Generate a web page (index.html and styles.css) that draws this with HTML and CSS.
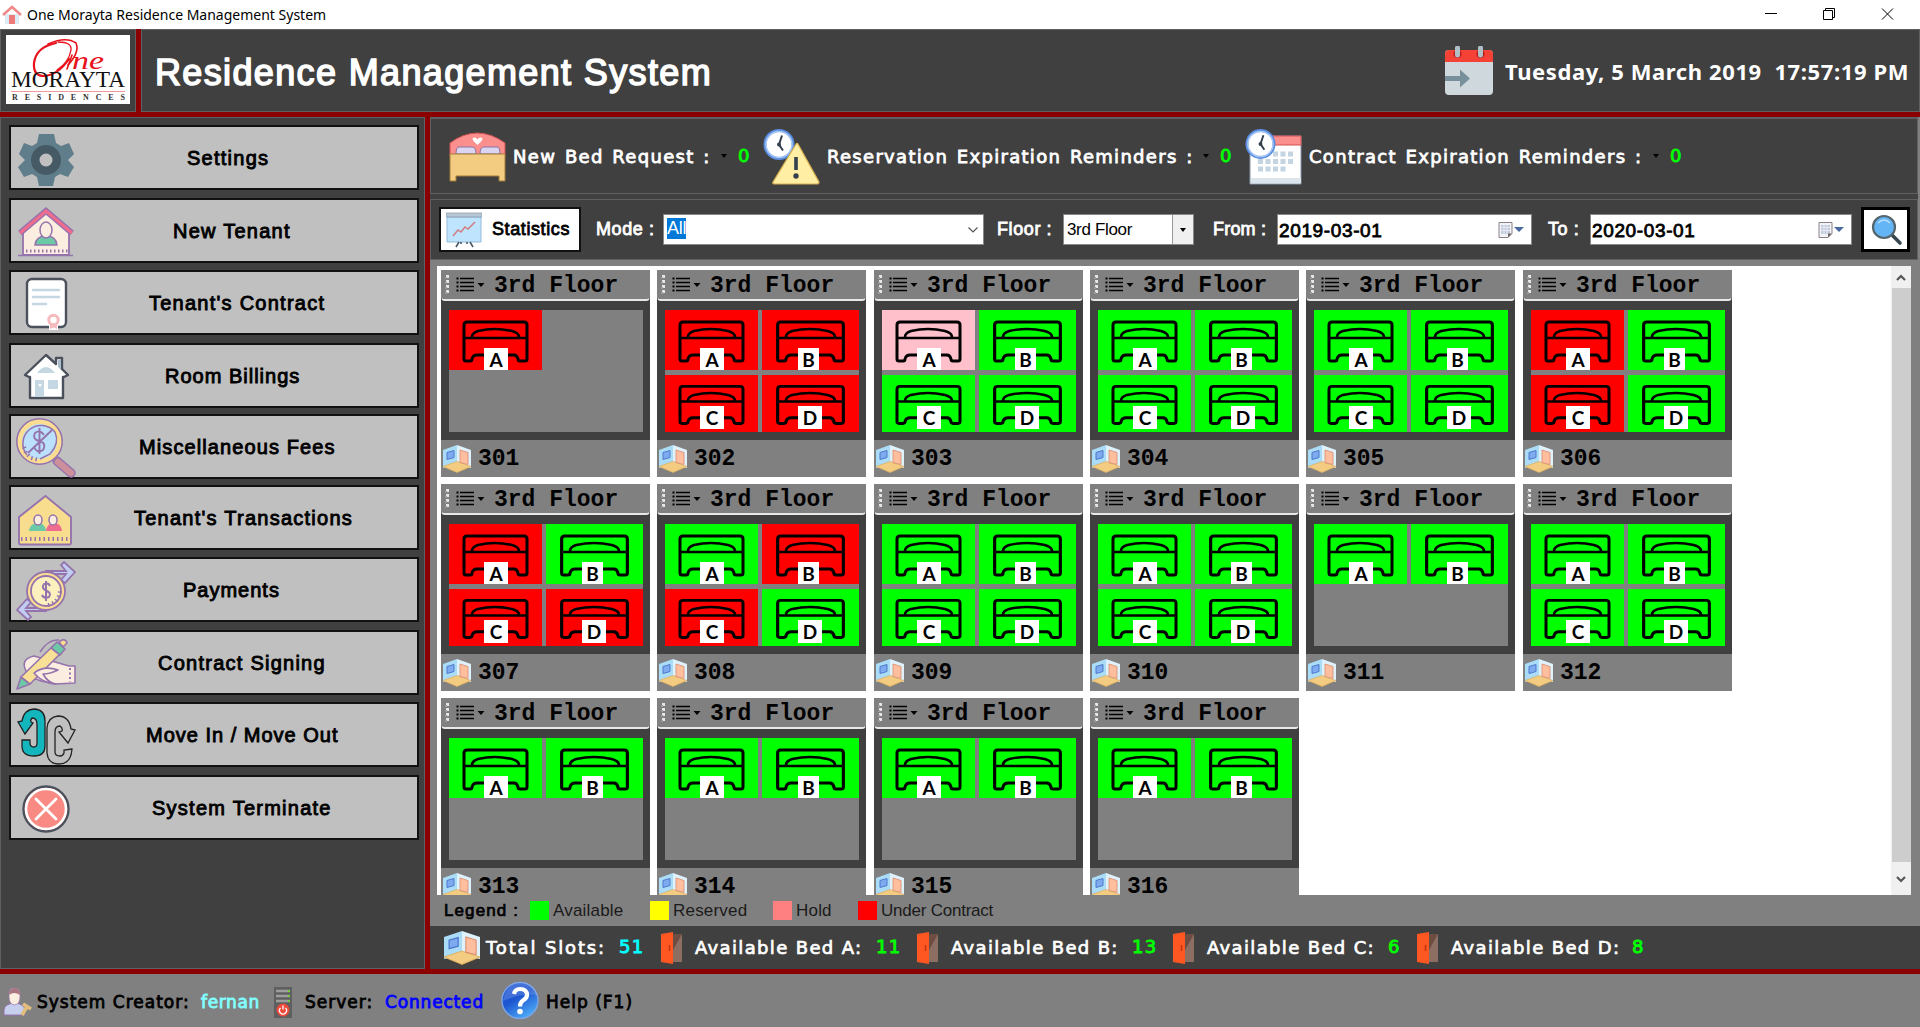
FILE: index.html
```html
<!DOCTYPE html>
<html lang="en">
<head>
<meta charset="utf-8">
<title>One Morayta Residence Management System</title>
<link rel="stylesheet" href="styles.css">
</head>
<body>
<svg class="defs" aria-hidden="true">
  <symbol id="bed" viewBox="0 0 93 60" preserveAspectRatio="none">
    <g fill="none" stroke="#000" stroke-width="3">
      <path d="M15 28V15q0-3 3-3h57q3 0 3 3v34q0 2-2 2h-5q-2 0-2-2-1-4-4-4H28q-4 0-5 4 0 2-2 2h-4q-2 0-2-2z"/>
      <path d="M15 28h63M23 27q0-4 6-6 17-4 34 0 7 2 7 6" stroke-width="2.600"/>
    </g>
  </symbol>
  <symbol id="room" viewBox="0 0 28 28" preserveAspectRatio="none">
    <path d="M0 5l14-5v21L0 23z" fill="#aadcf8"/>
    <path d="M14 0l14 5v18l-14-3z" fill="#dff1fb"/>
    <path d="M0 21.500l14-5 14 5-14 6z" fill="#f3cc82" stroke="#dcae5c" stroke-width=".7"/>
    <path d="M4 7.500l7-2v7l-7 2z" fill="#7eaaf0" stroke="#4e79cb" stroke-width="1"/>
    <path d="M17 5l8 2.500v12l-8-2z" fill="#ffbf9f" stroke="#d98a6c" stroke-width=".8"/>
  </symbol>
  <symbol id="door" viewBox="0 0 21 32">
    <path d="M8 2h13v28H8z" fill="#8d6e63"/><path d="M12 2h9L12 18z" fill="#6d4c41"/>
    <path d="M0 2l12-2v32L0 30z" fill="#ff5722"/><path d="M8.500 13v6" stroke="#bf360c" stroke-width="1.500"/>
  </symbol>
  <symbol id="clock" viewBox="0 0 32 32">
    <circle cx="16" cy="16" r="14" fill="#fff" stroke="#5b8de0" stroke-width="3"/><circle cx="16" cy="16" r="13" fill="none" stroke="#a9c8f5" stroke-width="1.500"/>
    <path d="M19 7l-3 9 4 6" fill="none" stroke="#333f4d" stroke-width="2"/><circle cx="16" cy="16" r="2" fill="#333f4d"/>
  </symbol>
  <symbol id="datepick" viewBox="0 0 26 16">
    <path d="M1 .5h13v11l-4 4H1z" fill="#f4f4f8" stroke="#8a8088"/><path d="M3 3h9v9H3z" fill="#c3cbe0"/>
    <path d="M3 5.500h9M3 8.500h9M6 3v9M9 3v9" stroke="#f4f4f8" stroke-width=".7"/><path d="M14 11.500h-4v4z" fill="#6d6468"/>
    <path d="M16 5h10l-5 5z" fill="#4a69a0"/>
  </symbol>
  <symbol id="menu" viewBox="0 0 40 20">
    <g fill="#e6e6e6"><path d="M1 0h3v3H1zM1 5h3v3H1zM1 10h3v3H1zM1 15h3v3H1z"/></g>
    <g fill="#9a9a9a"><path d="M0 2h2v2H0zM0 7h2v2H0zM0 12h2v2H0zM0 17h2v2H0z"/></g>
    <path d="M15 3.500h14M15 7.500h14M15 11.500h14M15 15.500h14" stroke="#000" stroke-width="1.500"/>
    <path d="M11.500 2.500h2v2h-2zM11.500 6.500h2v2h-2zM11.500 10.500h2v2h-2zM11.500 14.500h2v2h-2z"/>
    <path d="M32.500 8h7L36 12z"/>
  </symbol>
</svg>

<header class="titlebar">
  <svg class="app-icon" viewBox="0 0 20 20"><path d="M3 9h14v10H3z" fill="#dcecf7"/><path d="M7 10h6v9H7z" fill="#ef7b7b"/><path d="M1 10l9-8 9 8" fill="none" stroke="#f08a8a" stroke-width="2.600"/></svg>
  <span class="t-window">One Morayta Residence Management System</span>
  <svg class="win-controls" viewBox="0 0 140 29"><g fill="none" stroke="#000"><path d="M5 13.500h12"/><path d="M63.500 10.500h9v9h-9zM65.500 10v-1.500h9v9H73"/><path d="M122 8.500l11 11M133 8.500l-11 11"/></g></svg>
</header>

<section class="banner">
  <div class="brand">
    <svg viewBox="0 0 124 69">
      <g fill="none" stroke="#e8121c" stroke-linecap="round"><path d="M50 8Q30 12 28 28q-1 13 10 13 14-1 25-17" stroke-width="2.200"/><path d="M42 9Q60 1 70 8q4 9-8 22" stroke-width="1.600"/><path d="M52 7q14 0 13 8-2 12-14 20" stroke-width="1.300"/><path d="M66 20l-5 14" stroke-width="1.600"/></g>
      <text x="66" y="34" font-family="Liberation Serif, serif" font-style="italic" font-size="26" fill="#e8121c" textLength="32" lengthAdjust="spacingAndGlyphs">ne</text>
      <text x="5" y="52" font-family="Liberation Serif, serif" font-size="23" fill="#111" textLength="114" lengthAdjust="spacingAndGlyphs">MORAYTA</text>
      <path d="M5 56.500h114" stroke="#f09a9a"/>
      <text x="6" y="65" font-family="Liberation Serif, serif" font-weight="bold" font-size="8" fill="#333" textLength="113">RESIDENCES</text>
    </svg>
  </div>
  <div class="heading">
    <h1 class="t-h1">Residence Management System</h1>
    <svg class="cal-icon" viewBox="0 0 48 49"><rect y="4" width="48" height="45" rx="4" fill="#cfd8dc"/><path d="M0 16V8q0-4 4-4h40q4 0 4 4v8z" fill="#f44336"/><circle cx="12.500" cy="8" r="4" fill="#b71c1c"/><circle cx="35.500" cy="8" r="4" fill="#b71c1c"/><path d="M12.500 2v7M35.500 2v7" stroke="#b0bec5" stroke-width="5" stroke-linecap="round"/><path d="M0 30h15v-6.500l10 9-10 9V35H0z" fill="#78909c"/></svg>
    <span class="t-date">Tuesday, 5 March 2019&nbsp; 17:57:19 PM</span>
  </div>
</section>

<div class="body">
  <nav class="sidebar">
    <button class="nav n1"><svg viewBox="0 0 60 60"><path d="M23 5h15l2 9 5 3 8-3 5 11-6 6 6 7-6 10-8-3-5 3-2 9H23l-2-9-5-3-8 3-6-10 7-7-6-6 5-11 8 3 5-3z" fill="#607d8b"/><circle cx="30" cy="31" r="10.500" fill="none" stroke="#455a64" stroke-width="9"/><circle cx="30" cy="31" r="6.500" fill="#c0c0c0"/></svg><span>Settings</span></button>
    <button class="nav n2"><svg viewBox="0 0 60 60"><path d="M7 28L30 10l23 18v25H7z" fill="#fbeee0" stroke="#9573ad" stroke-width="1.800"/><path d="M4 31L30 9l26 22" fill="none" stroke="#9573ad" stroke-width="6"/><path d="M4 31L30 9l26 22" fill="none" stroke="#ef6c8e" stroke-width="3"/><path d="M19 43q1-9 11-9t11 9z" fill="#6cc9a6" stroke="#9573ad" stroke-width="1.500"/><ellipse cx="30" cy="28" rx="6" ry="8" fill="#fbeee0" stroke="#9573ad" stroke-width="1.500"/><path d="M10 49h42" stroke="#9573ad" stroke-width="3" stroke-dasharray="1.500 2.500"/><path d="M2 53.500h55" stroke="#9573ad" stroke-width="1.500"/></svg><span>New Tenant</span></button>
    <button class="nav n3"><svg viewBox="0 0 60 60"><rect x="11" y="5" width="39" height="48" rx="5" fill="#fff" stroke="#4a505c" stroke-width="2.400"/><path d="M17 16h26M17 23h26M17 30h13" stroke="#c5d7e3" stroke-width="2.600" stroke-linecap="round"/><path d="M33 49h9v7h-9z" fill="#fff"/><path d="M34 49h7v6l-3.500-1.500L34 55z" fill="#f4babe"/><circle cx="37.500" cy="46" r="4.700" fill="#fff" stroke="#f4babe" stroke-width="3"/></svg><span>Tenant's Contract</span></button>
    <button class="nav n4"><svg viewBox="0 0 60 60"><path d="M30 8L9 28l4 2h1v21h33V30h1l4-2-6-6V11h-6v6z" fill="#fff" stroke="#4a505c" stroke-width="2.400" stroke-linejoin="round"/><path d="M42 13h3v10l-3-3z" fill="#a9bccb"/><path d="M21 26q9-12 18 0zM19 33h9v17h-9zM32 33h10v9H32z" fill="#c5d7e3"/><circle cx="24" cy="38" r="1.500" fill="#fff"/></svg><span>Room Billings</span></button>
    <button class="nav n5"><svg viewBox="0 0 60 60"><path d="M41 43l14 12" stroke="#9573ad" stroke-width="9.500" stroke-linecap="round"/><path d="M42 44l13 11" stroke="#cc8f9b" stroke-width="6.500" stroke-linecap="round"/><circle cx="23.500" cy="23.500" r="20" fill="#bae0fb" stroke="#fbdd92" stroke-width="5"/><g fill="none" stroke="#9573ad" stroke-width="1.500"><circle cx="23.500" cy="23.500" r="22.700"/><path d="M11 37A17 17 0 0 1 39 14q5 11-5 22L24 41"/><path d="M8 29l2 6 5 5 8 2" stroke-width="4" stroke-dasharray="1.500 3"/><path d="M12 35l24-23M28 17q-4-6-9-2-3 6 4 8 8 2 4 9-6 4-9-3M23.500 10v26" stroke-width="1.900"/></g></svg><span>Miscellaneous Fees</span></button>
    <button class="nav n6"><svg viewBox="0 0 60 60"><path d="M29.500 7L55 28v26q0 1.500-1.500 1.500h-49Q3 55.500 3 54V28z" fill="#f9dd8f" stroke="#9573ad" stroke-width="1.900"/><path d="M5 50h50" stroke="#9573ad" stroke-width="4" stroke-dasharray="1.500 3"/><path d="M13 42q1-8 9-8 7 0 8 8z" fill="#6cc9a6"/><path d="M30 42q1-8 8-8 7 0 8 8z" fill="#ef6c8e"/><g fill="#fbeee0" stroke="#9573ad" stroke-width="1.500"><ellipse cx="22" cy="31" rx="4" ry="5"/><ellipse cx="37" cy="31" rx="4" ry="5"/></g></svg><span>Tenant's Transactions</span></button>
    <button class="nav n7"><svg viewBox="0 0 60 60"><g fill="#c2cdf2" stroke="#9573ad" stroke-width="1.800"><path d="M30 10h20l-5-6 3-3 11 10-10 11-4-3 5-6H30zM30 50H10l5 6-3 3L1 49l10-11 4 3-5 6h20z"/></g><circle cx="30" cy="30" r="19" fill="#fbdd92" stroke="#9573ad" stroke-width="1.800"/><circle cx="30" cy="30" r="15" fill="#fdf0bf" stroke="#9573ad" stroke-width="1.800"/><path d="M32 44q12-3 12-16" fill="none" stroke="#9573ad" stroke-width="4" stroke-dasharray="1.500 3"/><path d="M34 25q-2-4-6-2-3 4 2 6.500 6 2.500 3 6.500-5 2-7-2M30 20v20" fill="none" stroke="#9573ad" stroke-width="2"/></svg><span>Payments</span></button>
    <button class="nav n8"><svg viewBox="0 0 60 60"><g stroke="#9573ad" stroke-width="1.600" stroke-linejoin="round"><path d="M10 37Q4 25 18 22l14 4 21 6h6v17l-20 1-14-3-8-3z" fill="#fbeee0"/><path d="M24 18q8-13 19-12" fill="none"/><path d="M1 55l4-12 9 7z" fill="#6cc9a6"/><path d="M5 43l32-31 8 7-31 31z" fill="#f8e196"/><path d="M35 14l6-6 8 7-5 6z" fill="#6cc9a6"/><path d="M43 8l3-2q4-1 5 3l-4 4z" fill="#fbdd92"/><path d="M18 39q10-8 24-3-8 4-15 4 5 9 13 10-14-1-22-11z" fill="#fbeee0"/></g><path d="M54 34v14" stroke="#9573ad" stroke-width="2" stroke-dasharray="2 2.500"/></svg><span>Contract Signing</span></button>
    <button class="nav n9"><svg viewBox="0 0 60 60"><g stroke="#222" stroke-width="1.300"><path d="M6 34h8v3q0 4 4 4 3 0 3-4V18q0-6-5-6-2 2-1 4l2 1-8 11-7-12 4-1Q8 3 19 3q10 1 10 12v25q0 10-11 10Q6 50 6 40z" fill="#14b6bd"/><path d="M56 43l-8 1v3q-1 3-4 3-5 0-5-4V26q0-6 5-6 3 2 2 5l-3 1 9 11 7-13-4-1Q53 10 42 10q-10 1-11 12v25q1 11 12 11 12 0 13-15z" fill="none"/></g></svg><span>Move In / Move Out</span></button>
    <button class="nav n10"><svg viewBox="0 0 60 60"><circle cx="30" cy="30" r="22.500" fill="#f98983" stroke="#4a505c" stroke-width="2.400"/><circle cx="30" cy="30" r="20" fill="none" stroke="#fff" stroke-width="2.600"/><path d="M20 20l20 20M40 20L20 40" stroke="#fff" stroke-width="2.800" stroke-linecap="round"/></svg><span>System Terminate</span></button>
  </nav>

  <main class="content">
    <section class="reminders">
      <div class="rem r1"><svg viewBox="0 0 57 50"><path d="M1 24V11Q28-9 56 11v13z" fill="#fa8f8d" stroke="#d25252"/><path d="M28.500 13q-8-7-3-7.500 2 0 3 2 1-2 3-2 5 .5-3 7.500z" fill="#fff"/><path d="M7 22q0-7 3-7h13q4 0 4 7zM31 22q0-7 4-7h13q3 0 3 7z" fill="#dcd5f2" stroke="#8b75a1"/><path d="M1 22h55v27h-6v-5H7v5H1z" fill="#f3cc82" stroke="#a37c3b"/></svg><span class="rem-label t-rem1">New Bed Request :</span><i class="caret"></i><b>0</b></div>
      <div class="rem r2"><svg viewBox="0 0 57 57"><use href="#clock" x="0" y="0" width="32" height="33"/><path d="M33 16q1-1 2 0l21 38q0 2-2 2H12q-3 0-2-2z" fill="#ffeea3" stroke="#d6ae4f" stroke-width="1.200"/><path d="M33 29v13" stroke="#333f4d" stroke-width="3.600"/><circle cx="33" cy="48" r="2.700" fill="#333f4d"/></svg><span class="rem-label t-rem2">Reservation Expiration Reminders :</span><i class="caret"></i><b>0</b></div>
      <div class="rem r3"><svg viewBox="0 0 57 57"><path d="M5 8h51v48H5z" fill="#fff" stroke="#8496a6"/><path d="M5 8h51v9H5z" fill="#fa8f8d" stroke="#d25252"/><path d="M6 50h50v5H6z" fill="#dce5ec"/><g stroke="#c4d4e1" stroke-width="5" stroke-dasharray="5 2.500"><path d="M28 26h20M13 33.500h35M13 41h28"/></g><use href="#clock" x="0" y="0" width="31" height="32"/></svg><span class="rem-label t-rem3">Contract Expiration Reminders :</span><i class="caret"></i><b>0</b></div>
    </section>

    <section class="toolbar">
      <button class="stats"><svg viewBox="0 0 36 36"><path d="M1 5h34v25H1z" fill="#bfe4fd" stroke="#94bbdb"/><path d="M0 1h36v4H0z" fill="#b6c6d3" stroke="#8496a6" stroke-width=".7"/><path d="M13 30l-3 5M24 30l3 5M15 30v2M21 30v2" stroke="#4a5866" stroke-width="1.600"/><path d="M7 24l5-6 3 2 4-5 3 2 7-7" fill="none" stroke="#d07c80" stroke-width="1.500"/></svg><span class="t-stats">Statistics</span></button>
      <label class="t-mode">Mode :</label>
      <div class="combo mode"><mark>All</mark><svg viewBox="0 0 10 6"><path d="M.5.500L5 5 9.500.500" fill="none" stroke="#555" stroke-width="1.200"/></svg></div>
      <label class="t-floor">Floor :</label>
      <div class="combo floor"><span class="t-3rd">3rd Floor</span><span class="drop"><i class="caret"></i></span></div>
      <label class="t-from">From :</label>
      <div class="combo from"><span class="t-d1">2019-03-01</span><svg viewBox="0 0 26 16"><use href="#datepick"/></svg></div>
      <label class="t-to">To :</label>
      <div class="combo to"><span class="t-d1">2020-03-01</span><svg viewBox="0 0 26 16"><use href="#datepick"/></svg></div>
      <button class="search"><svg viewBox="0 0 32 32"><path d="M20 20l9 9" stroke="#37474f" stroke-width="3.600" stroke-linecap="round"/><circle cx="13" cy="13" r="11" fill="#64b5f6" stroke="#56646c" stroke-width="2.200"/><path d="M7 9q6-6 12 0" fill="none" stroke="#bbdefb" stroke-width="1.600"/></svg></button>
    </section>

    <section class="rooms-frame">
      <div class="rooms" id="rooms"></div>
      <div class="scrollbar"><svg viewBox="0 0 10 7"><path d="M1 6l4-4 4 4" fill="none" stroke="#555" stroke-width="2.200"/></svg><i class="thumb"></i><svg viewBox="0 0 10 7"><path d="M1 1l4 4 4-4" fill="none" stroke="#555" stroke-width="2.200"/></svg></div>
    </section>

    <section class="legend">
      <span class="t-legend">Legend :</span>
      <span class="key k1"><i></i>Available</span>
      <span class="key k2"><i></i>Reserved</span>
      <span class="key k3"><i></i>Hold</span>
      <span class="key k4"><i></i>Under Contract</span>
    </section>

    <section class="totals">
      <div class="tot slots"><svg><use href="#room"/></svg><span class="t-tot">Total Slots:</span><b>51</b></div>
      <div class="tot ta"><svg><use href="#door"/></svg><span class="t-bed">Available Bed A:</span><b>11</b></div>
      <div class="tot tb"><svg><use href="#door"/></svg><span class="t-bed">Available Bed B:</span><b>13</b></div>
      <div class="tot tc"><svg><use href="#door"/></svg><span class="t-bed">Available Bed C:</span><b>6</b></div>
      <div class="tot td"><svg><use href="#door"/></svg><span class="t-bed">Available Bed D:</span><b>8</b></div>
    </section>
  </main>
</div>

<footer class="status">
  <div class="st s1"><svg viewBox="0 0 29 30"><path d="M1 28v-5q0-6 11-7 9 1 10 7v5z" fill="#c6cfee" stroke="#9573ad"/><path d="M6 10q-1-9 5.500-9T17 10q0 7-5.500 8Q6 17 6 10z" fill="#fbeee0" stroke="#9573ad" stroke-width=".7"/><path d="M6 8q0-7 6-7 5 0 5 7-6-4-11 0z" fill="#a87480"/><path d="M19 28l6-10M20 17l8 5" stroke="#e3bd7a" stroke-width="3.500"/></svg><span class="t-creator">System Creator:</span><span class="t-fernan">fernan</span></div>
  <div class="st s2"><svg viewBox="0 0 18 31"><path d="M0 0h18v31H0z" fill="#5f5f5f"/><path d="M2 4h14M2 9h14M2 14h14" stroke="#9e9e9e" stroke-width="2.600"/><path d="M14 4h2M14 9h2M14 14h2" stroke="#76d13a" stroke-width="2"/><circle cx="9" cy="23" r="6.500" fill="#f04a3c"/><path d="M6.500 21a3.500 3.500 0 1 0 5 0M9 18.500v4" fill="none" stroke="#fff" stroke-width="1.300"/></svg><span class="t-server">Server:</span><span class="t-conn">Connected</span></div>
  <div class="st s3"><svg viewBox="0 0 38 39"><defs><linearGradient id="hg" x2=".6" y2="1"><stop stop-color="#2a5fd8"/><stop offset=".5" stop-color="#1d55d0"/><stop offset="1" stop-color="#4aa8f5"/></linearGradient></defs><circle cx="19" cy="19.500" r="18" fill="url(#hg)" stroke="#7fa4e6" stroke-width="1.400"/><path d="M2 20Q5 3 19 2q14 1 17 12-16-2-34 6z" fill="#fff" opacity=".15"/><path d="M13 13q1-5 6-5 7 0 7 6 0 3-4 5.500-3 2-3 6" fill="none" stroke="#fff" stroke-width="4.200"/><circle cx="19" cy="30.500" r="2.800" fill="#fff"/></svg><span class="t-help">Help (F1)</span></div>
</footer>
<script src="rooms.js"></script>
</body>
</html>
```

FILE: styles.css
```css
* { box-sizing: border-box; }
body { margin: 0; width: 1920px; height: 1027px; overflow: hidden; display: flex; flex-direction: column; background: #808080; font-family: "Liberation Sans", Arial, sans-serif; white-space: nowrap; }
button { font: inherit; color: inherit; padding: 0; }
svg { display: block; flex: none; }
.defs { width: 0; height: 0; position: absolute; }

/* window title bar */
.titlebar { height: 29px; flex: none; background: #fff; display: flex; align-items: center; }
.app-icon { width: 20px; height: 20px; margin: 0 5px 0 2px; }
.t-window { font: 14px/20px "Noto Sans", sans-serif; color: #000; }
.win-controls { width: 140px; height: 29px; margin-left: auto; margin-right: 20px; }

/* banner */
.banner { height: 88px; flex: none; display: flex; gap: 5px; background: #8b0000; border-bottom: 5px solid #8b0000; }
.brand, .heading { background: #404040; border: 1px solid #606060; }
.brand { width: 136px; padding: 5px; }
.brand svg { width: 124px; height: 69px; background: #fff; }
.heading { flex: 1; display: flex; align-items: center; }
.t-h1 { margin: 4px 0 0 13px; font-size: 36px; line-height: 44px; font-weight: 400; color: #fff; -webkit-text-stroke: 1.5px; letter-spacing: 1.36px; }
.cal-icon { width: 48px; height: 49px; margin-left: auto; margin-right: 12px; }
.t-date { font: bold 22px/30px "Noto Sans", sans-serif; color: #fff; width: 414px; letter-spacing: .6px; }

/* sidebar */
.body { height: 852px; flex: none; display: flex; background: #8b0000; gap: 5px; }
.sidebar { width: 425px; background: #404040; border: 1px solid #606060; padding: 7px 0 0 8px; }
.nav { display: flex; align-items: center; width: 410px; height: 65px; margin: 0 0 7px; border: 2px solid #111; background: #c0c0c0; text-align: left; }
.nav svg { width: 60px; height: 60px; margin: 2px 0 0 5px; }
.nav span { font-size: 20px; line-height: 26px; color: #000; -webkit-text-stroke: .9px; letter-spacing: 1.25px; }
.n1, .n3, .n7, .n9 { margin-bottom: 8px; }
.n4, .n5 { margin-bottom: 6px; }
.n1 span { margin-left: 111px; }
.n2 span { margin-left: 97px; }
.n3 span { margin-left: 73px; }
.n4 span { margin-left: 89px; letter-spacing: 1px; }
.n5 span { margin-left: 63px; letter-spacing: 1.1px; }
.n6 span { margin-left: 58px; }
.n7 span { margin-left: 107px; letter-spacing: 1px; }
.n8 span { margin-left: 82px; }
.n9 span { margin-left: 70px; letter-spacing: 1px; }
.n10 span { margin-left: 76px; }

/* reminders */
.content { width: 1490px; display: flex; flex-direction: column; background: #808080; }
.reminders { height: 77px; margin-right: 2px; background: #404040; border: 1px solid #606060; border-top-width: 2px; display: flex; padding-left: 18px; }
.rem { display: flex; align-items: center; font: 18px/22px "DejaVu Sans", sans-serif; }
.rem-label { color: #fff; margin: 2px 10px 0 7px; -webkit-text-stroke: .8px; letter-spacing: 1.3px; word-spacing: 1.7px; }
.rem b { font-weight: 400; color: #0f0; margin: 0 0 0 11px; -webkit-text-stroke: .9px; }
.r1 { width: 314px; } .r2 { width: 482px; }
.r1 svg { width: 57px; height: 50px; margin-top: 2px; }
.r2 svg, .r3 svg { width: 57px; height: 57px; }
.t-rem1 { width: 198px; } .t-rem2 { width: 366px; } .t-rem3 { width: 334px; }
.caret { display: block; width: 0; height: 0; border: 3.5px solid transparent; border-top: 4px solid #000; border-bottom: 0; }

/* filter toolbar */
.toolbar { height: 61px; margin: 5px 2px 0 0; background: #404040; border: 1px solid #606060; display: flex; align-items: center; box-shadow: 0 -5px #404040; padding-left: 8px; }
.stats { width: 142px; height: 45px; border: 2px solid #111; background: #fff; display: flex; align-items: center; }
.stats svg { width: 36px; height: 36px; margin: 0 10px 0 5px; }
.t-stats, .toolbar label { font-size: 18px; -webkit-text-stroke: .8px; letter-spacing: .6px; }
.toolbar label { color: #fff; }
.t-mode { width: 67px; margin-left: 15px; }
.t-floor { width: 66px; margin-left: 14px; }
.t-from { width: 64px; margin-left: 19px; }
.toolbar .t-from { letter-spacing: .2px; }
.t-to { width: 42px; margin-left: 16px; }
.combo { height: 31px; background: #fff; border: 1px solid #888; display: flex; align-items: center; justify-content: space-between; }
.combo svg { width: 26px; height: 16px; margin-right: 7px; }
.mode { width: 321px; margin-right: -1px; }
.mode mark { background: #0078d7; color: #fff; font-size: 18px; line-height: 21px; margin: -3px 0 0 3px; letter-spacing: -.2px; }
.mode svg { width: 10px; height: 6px; margin-right: 5px; }
.floor { width: 131px; }
.drop { width: 21px; height: 29px; background: #f0f0f0; border-left: 1px solid #999; display: flex; align-items: center; justify-content: center; }
.from { width: 255px; }
.to { width: 262px; }
.t-3rd { font-size: 17px; margin-left: 3px; letter-spacing: -.34px; }
.t-d1 { font-size: 19px; margin: 2px 0 0 1px; -webkit-text-stroke: .8px; letter-spacing: .63px; }
.search { width: 49px; height: 45px; background: #fff; border: 3px solid #000; margin-left: 9px; }
.search svg { width: 32px; height: 32px; margin: 0 0 0 7px; }

/* room cards */
.rooms-frame { display: flex; height: 629px; margin: 6px 9px 0 7px; background: #fff; overflow: hidden; }
.rooms { flex: 1; display: grid; grid-template-columns: 216px 217px 216px 216px 217px 209px; grid-auto-rows: 207px; row-gap: 7px; padding: 4px; }
.room { width: 209px; background: #404040; display: flex; flex-direction: column; font: bold 23px/28px "Liberation Mono", monospace; color: #000; }
.room-head { height: 31px; margin-bottom: 9px; background: #808080; border: 1px solid #808080; border-bottom: 2px solid #e8e8e8; border-radius: 0 0 4px 4px; display: flex; align-items: center; padding-top: 2px; }
.room-head svg { width: 40px; height: 20px; margin: -2px 9px 0 3px; }
.beds { width: 194px; height: 122px; margin-left: 8px; background: #808080; display: grid; grid-template-columns: 93px 97px; grid-template-rows: 60px 57px; gap: 5px 4px; }
.slot { position: relative; }
.slot svg { width: 100%; height: 100%; }
.slot span { position: absolute; left: 35px; top: 38px; width: 24px; height: 22px; background: #fff; font: bold 19px/24px Lato, sans-serif; text-align: center; }
.slot:nth-child(2) span, .slot:nth-child(4) span { left: 36px; }
.slot:nth-child(2) span { width: 21px; }
.slot:nth-child(n+3) span { top: 31px; height: 23px; }
.available { background: #0f0; }
.contract { background: #f00; }
.hold { background: #ffc0cb; }
.room-foot { height: 37px; margin-top: auto; background: #808080; display: flex; align-items: center; }
.room-foot svg { width: 28px; height: 28px; margin: 0 7px 0 2px; }
.scrollbar { width: 20px; background: #f0f0f0; display: flex; flex-direction: column; align-items: center; }
.scrollbar svg { width: 10px; height: 7px; margin: 8px 0 7px; }
.scrollbar svg:last-child { margin-top: 14px; }
.thumb { width: 19px; height: 574px; background: #cdcdcd; }

/* legend */
.legend { height: 31px; display: flex; align-items: center; font-size: 17px; line-height: 20px; color: #1a1a1a; padding: 1px 0 0 14px; }
.t-legend { width: 86px; color: #000; -webkit-text-stroke: .7px; letter-spacing: 1.1px; }
.key { display: flex; align-items: center; letter-spacing: .2px; }
.key i { width: 19px; height: 19px; margin: -1px 4px 0 0; }
.k1 { width: 120px; } .k2 { width: 123px; } .k3 { width: 85px; } .k4 { letter-spacing: -.23px; }
.k1 i { background: #0f0; } .k2 i { background: #ff0; } .k3 i { background: #ff8080; } .k4 i { background: #f00; }

/* totals */
.totals { height: 43px; background: #404040; display: flex; font: 18px/24px "DejaVu Sans", sans-serif; color: #fff; padding-left: 14px; }
.tot { display: flex; align-items: center; -webkit-text-stroke: .7px; letter-spacing: 1.35px; }
.tot svg { width: 21px; height: 32px; }
.tot b { font-weight: 400; color: #0f0; margin-top: -2px; -webkit-text-stroke: .9px; }
.slots svg { width: 36px; height: 34px; margin-right: 6px; }
.slots b { color: #0ff; }
.t-tot { width: 133px; letter-spacing: 1.86px; }
.t-bed { width: 181px; margin-left: 13px; }
.slots { width: 217px; } .ta, .tb { width: 256px; } .tc { width: 244px; }

/* status bar */
.status { flex: 1; border-top: 5px solid #8b0000; display: flex; font: 17px/22px "DejaVu Sans", sans-serif; color: #000; padding-left: 3px; }
.st { display: flex; align-items: center; -webkit-text-stroke: .8px; margin-top: 3px; letter-spacing: 1px; }
.st svg { width: 29px; height: 30px; margin-right: 5px; }
.s1 { width: 271px; } .s2 { width: 227px; }
.s2 svg { width: 18px; height: 31px; margin-right: 13px; }
.s3 svg { width: 38px; height: 39px; margin: -3px 7px 0 0; }
.t-creator { width: 164px; } .t-fernan { color: #80ffff; letter-spacing: .65px; }
.t-server { width: 80px; } .t-conn { color: #00f; letter-spacing: .83px; }
```

FILE: rooms.js
```js
// One letter per bed: a = available, c = under contract, h = hold.
const rooms = {
  301: "c", 302: "cccc", 303: "haaa", 304: "aaaa", 305: "aaaa", 306: "caca",
  307: "cacc", 308: "acca", 309: "aaaa", 310: "aaaa", 311: "aa", 312: "aaaa",
  313: "aa", 314: "aa", 315: "aa", 316: "aa"
};
const states = { a: "available", c: "contract", h: "hold" };

document.getElementById("rooms").innerHTML = Object.entries(rooms).map(([number, beds]) => `
  <article class="room">
    <div class="room-head"><svg><use href="#menu"/></svg>3rd Floor</div>
    <div class="beds">${[...beds].map((state, i) =>
      `<div class="slot ${states[state]}"><svg><use href="#bed"/></svg><span>${"ABCD"[i]}</span></div>`).join("")}</div>
    <div class="room-foot"><svg><use href="#room"/></svg>${number}</div>
  </article>`).join("");
```
